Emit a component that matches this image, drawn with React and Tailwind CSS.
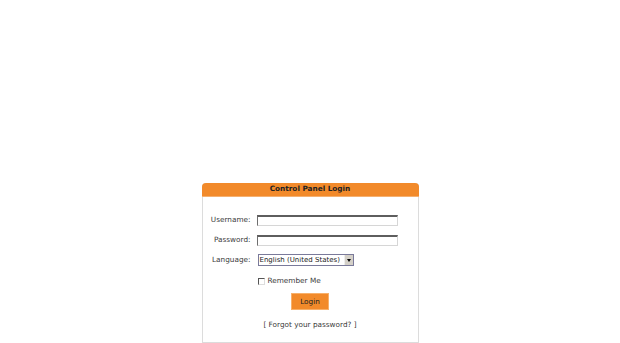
export default function App() {
  const font = { fontFamily: '"DejaVu Sans", Verdana, sans-serif' }

  return (
    <div className="w-[620px] h-[343px] bg-white overflow-hidden" style={font}>
      <div className="flex justify-center pt-[183px]">
        <div className="w-[217px] h-[160px] border border-[#dcdcdc] border-t-0 rounded-t-[4px] bg-white text-[7.3px] text-[#3a3a3a]">
          <div className="h-[14px] -mx-px bg-[#f28a2a] rounded-t-[4px] border-b border-[#f5b070] flex items-center justify-center font-bold text-[#222]">
            Control Panel Login
          </div>

          <div className="pt-[13px] flex flex-col">
            <div className="flex items-center h-[20px]">
              <span className="w-[48px] text-right">Username:</span>
              <div className="ml-[6px] w-[141px] h-[11px] border border-t-2 border-t-[#5e5e5e] border-l-[#6e6e6e] border-r-[#d6d6d6] border-b-[#d6d6d6] bg-white" />
            </div>

            <div className="flex items-center h-[20px]">
              <span className="w-[48px] text-right">Password:</span>
              <div className="ml-[6px] w-[141px] h-[11px] border border-t-2 border-t-[#5e5e5e] border-l-[#6e6e6e] border-r-[#d6d6d6] border-b-[#d6d6d6] bg-white" />
            </div>

            <div className="flex items-center h-[20px]">
              <span className="w-[48px] text-right">Language:</span>
              <div className="ml-[7px] w-[96px] h-[12px] border border-[#7a7a9a] bg-white flex items-center">
                <span className="flex-1 pl-[1px] leading-none text-[7px] text-[#222] whitespace-nowrap overflow-hidden">English (United States)</span>
                <div className="w-[9px] h-full bg-[#d4d0c8] border-l border-[#eee] flex items-center justify-center">
                  <div className="w-0 h-0 border-l-[2.5px] border-r-[2.5px] border-t-[3px] border-l-transparent border-r-transparent border-t-black" />
                </div>
              </div>
            </div>

            <div className="flex items-center h-[20px] mt-[1px]">
              <div className="ml-[55px] w-[7px] h-[7px] border border-t-[#555] border-l-[#555] border-r-[#ddd] border-b-[#ddd] bg-white" />
              <span className="ml-[3px]">Remember Me</span>
            </div>

            <div className="flex justify-center mt-[2px]">
              <button className="w-[38px] h-[17px] bg-[#f28a2a] border border-[#f8b06a] text-[#222] leading-none">
                Login
              </button>
            </div>

            <div className="mt-[10px] text-center leading-[9px]">[ Forgot your password? ]</div>
          </div>
        </div>
      </div>
    </div>
  )
}
